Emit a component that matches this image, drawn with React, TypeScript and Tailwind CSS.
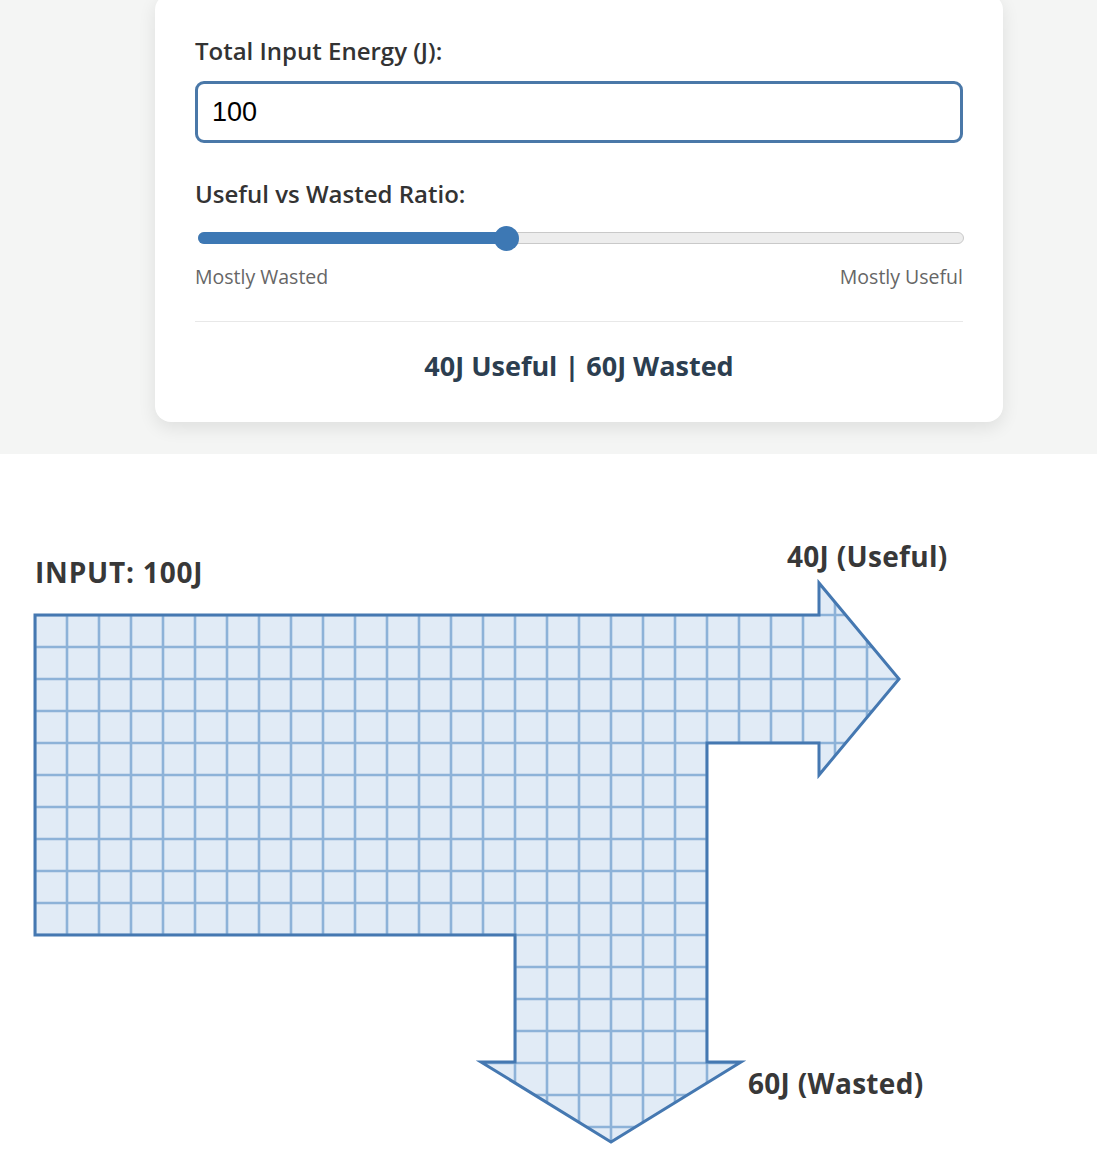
import React from "react";

const W = 32;

function Diagram() {
  const poly =
    "35,615 819,615 819,583 899,679 819,775 819,743 707,743 707,1062 741,1062 611,1142 481,1062 515,1062 515,935 35,935";
  const font = "'Open Sans', sans-serif";
  return (
    <svg width="1097" height="706" viewBox="0 454 1097 706" className="block">
      <defs>
        <pattern id="grid" x="35" y="615" width={W} height={W} patternUnits="userSpaceOnUse">
          <rect x="0" y="0" width={W} height={W} fill="#e1ebf6" />
          <path
            d={`M0 0 H${W} M0 ${W} H${W} M0 0 V${W} M${W} 0 V${W}`}
            stroke="#8db2d8"
            strokeWidth="2.6"
            fill="none"
          />
        </pattern>
      </defs>
      <polygon points={poly} fill="url(#grid)" />
      <polygon points={poly} fill="none" stroke="#4578b1" strokeWidth="3" strokeLinejoin="miter" />
      <text x="35" y="583" fontFamily={font} fontWeight="700" fontSize="28" letterSpacing="0.8" fill="#383838">
        INPUT: 100J
      </text>
      <text x="787" y="567" fontFamily={font} fontWeight="700" fontSize="28" letterSpacing="0.3" fill="#383838">
        40J (Useful)
      </text>
      <text x="748" y="1094" fontFamily={font} fontWeight="700" fontSize="28" letterSpacing="0.3" fill="#383838">
        60J (Wasted)
      </text>
    </svg>
  );
}

export default function App() {
  return (
    <div className="min-h-screen bg-white font-['Open_Sans',sans-serif]">
      <div className="bg-[#f4f5f4] pb-8 pt-px">
        <div className="ml-[155px] -mt-[7px] w-[848px] rounded-2xl bg-white px-10 pt-[41px] pb-[37px] shadow-[0_6px_18px_rgba(0,0,0,0.09)]">
          <div className="text-[24px] font-semibold leading-[32px] text-[#333]">Total Input Energy (J):</div>
          <div className="mt-[14px] flex h-[62px] items-center rounded-[9px] border-[3px] border-[#4a78a8] px-[14px]">
            <span className="font-['Liberation_Sans',Arial,sans-serif] text-[27px] text-black">100</span>
          </div>
          <div className="mt-[35px] text-[24px] font-semibold leading-[32px] text-[#333]">Useful vs Wasted Ratio:</div>
          <div className="relative mt-[16px] ml-[3px] h-[24px] w-[766px]">
            <div className="absolute left-0 right-0 top-[6px] h-[12px] rounded-full border border-[#c9c9c9] bg-[#ededed]" />
            <div className="absolute left-0 top-[6px] h-[12px] w-[308px] rounded-full bg-[#3d78b4]" />
            <div className="absolute left-[296px] top-0 h-[25px] w-[25px] rounded-full bg-[#3d78b4]" />
          </div>
          <div className="mt-[14px] flex justify-between text-[19.5px] leading-[26px] text-[#666]">
            <span>Mostly Wasted</span>
            <span>Mostly Useful</span>
          </div>
          <div className="mt-[31px] border-t border-[#e8e8e8]" />
          <div className="mt-[25px] text-center text-[27px] font-bold leading-[38px] text-[#2c3e50]">
            40J Useful | 60J Wasted
          </div>
        </div>
      </div>
      <Diagram />
    </div>
  );
}
